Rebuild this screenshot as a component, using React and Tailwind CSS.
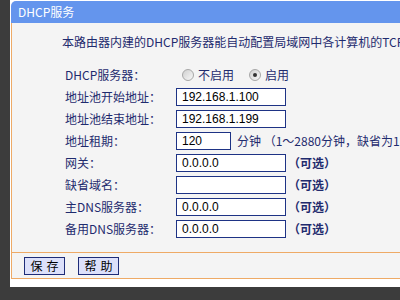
import React from 'react';

const font = { fontFamily: '"Noto Sans CJK SC", sans-serif' };

function Radio({ checked }) {
  return (
    <span className="w-[12px] h-[12px] rounded-full border border-[#a7a7a7] bg-gradient-to-br from-[#d0d0d0] to-[#f8f8f8] flex items-center justify-center flex-shrink-0">
      {checked && <span className="w-[4px] h-[4px] rounded-full bg-[#333]" />}
    </span>
  );
}

function Field({ value, w = 'w-[110px]' }) {
  return (
    <div className={`${w} h-[18px] border border-[#1e3385] bg-white flex items-center pl-[5px] text-[12px] text-black leading-none font-['Liberation_Sans',sans-serif]`}>
      {value}
    </div>
  );
}

function Row({ label, children }) {
  return (
    <div className="h-[22px] flex items-center">
      <div className="w-[111px] flex-shrink-0">{label}</div>
      {children}
    </div>
  );
}

const Optional = () => <span className="ml-[2px] font-bold">（可选）</span>;

export default function App() {
  return (
    <div className="w-[400px] h-[300px] bg-[#3c3c3c] overflow-hidden" style={font}>
      <div className="ml-[10px] h-[287px] bg-white pt-[1px] pl-[1px] w-[420px]">
        {/* title */}
        <div className="h-[22px] bg-[#6495ed] rounded-tl-[5px] flex items-center pl-[7px] text-white text-[12px] leading-none">
          DHCP服务
        </div>

        <div className="border-l border-[#eeaa66] bg-[#f4f4f4] text-[12px] text-[#1f2b6e] leading-[18px]">
          <div className="h-[229px] pl-[50px] pt-[10px]">
            <div className="h-[18px] whitespace-nowrap">本路由器内建的DHCP服务器能自动配置局域网中各计算机的TCP/IP协议。</div>
            <div className="pl-[3px] mt-[13px]">
              <Row label="DHCP服务器：">
                <div className="flex items-center pl-[6px]">
                  <Radio />
                  <span className="ml-[4px]">不启用</span>
                  <span className="ml-[15px]"><Radio checked /></span>
                  <span className="ml-[4px]">启用</span>
                </div>
              </Row>
              <Row label="地址池开始地址：">
                <Field value="192.168.1.100" />
              </Row>
              <Row label="地址池结束地址：">
                <Field value="192.168.1.199" />
              </Row>
              <Row label="地址租期：">
                <Field value="120" w="w-[55px]" />
                <span className="ml-[6px] whitespace-nowrap">分钟 （1～2880分钟，缺省为120）</span>
              </Row>
              <Row label="网关：">
                <Field value="0.0.0.0" />
                <Optional />
              </Row>
              <Row label="缺省域名：">
                <Field value="" />
                <Optional />
              </Row>
              <Row label="主DNS服务器：">
                <Field value="0.0.0.0" />
                <Optional />
              </Row>
              <Row label="备用DNS服务器：">
                <Field value="0.0.0.0" />
                <Optional />
              </Row>
            </div>
          </div>

          <div className="border-t border-b border-[#eeaa66] h-[27px] flex items-start pt-[4px] pl-[12px] gap-[13px]">
            <button className="w-[41px] h-[18px] border border-[#1e2c78] bg-[#dce0fa] text-black text-[12px] leading-none tracking-[4px] pl-[4px]">保存</button>
            <button className="w-[41px] h-[18px] border border-[#1e2c78] bg-[#dce0fa] text-black text-[12px] leading-none tracking-[4px] pl-[4px]">帮助</button>
          </div>
        </div>
      </div>
    </div>
  );
}
